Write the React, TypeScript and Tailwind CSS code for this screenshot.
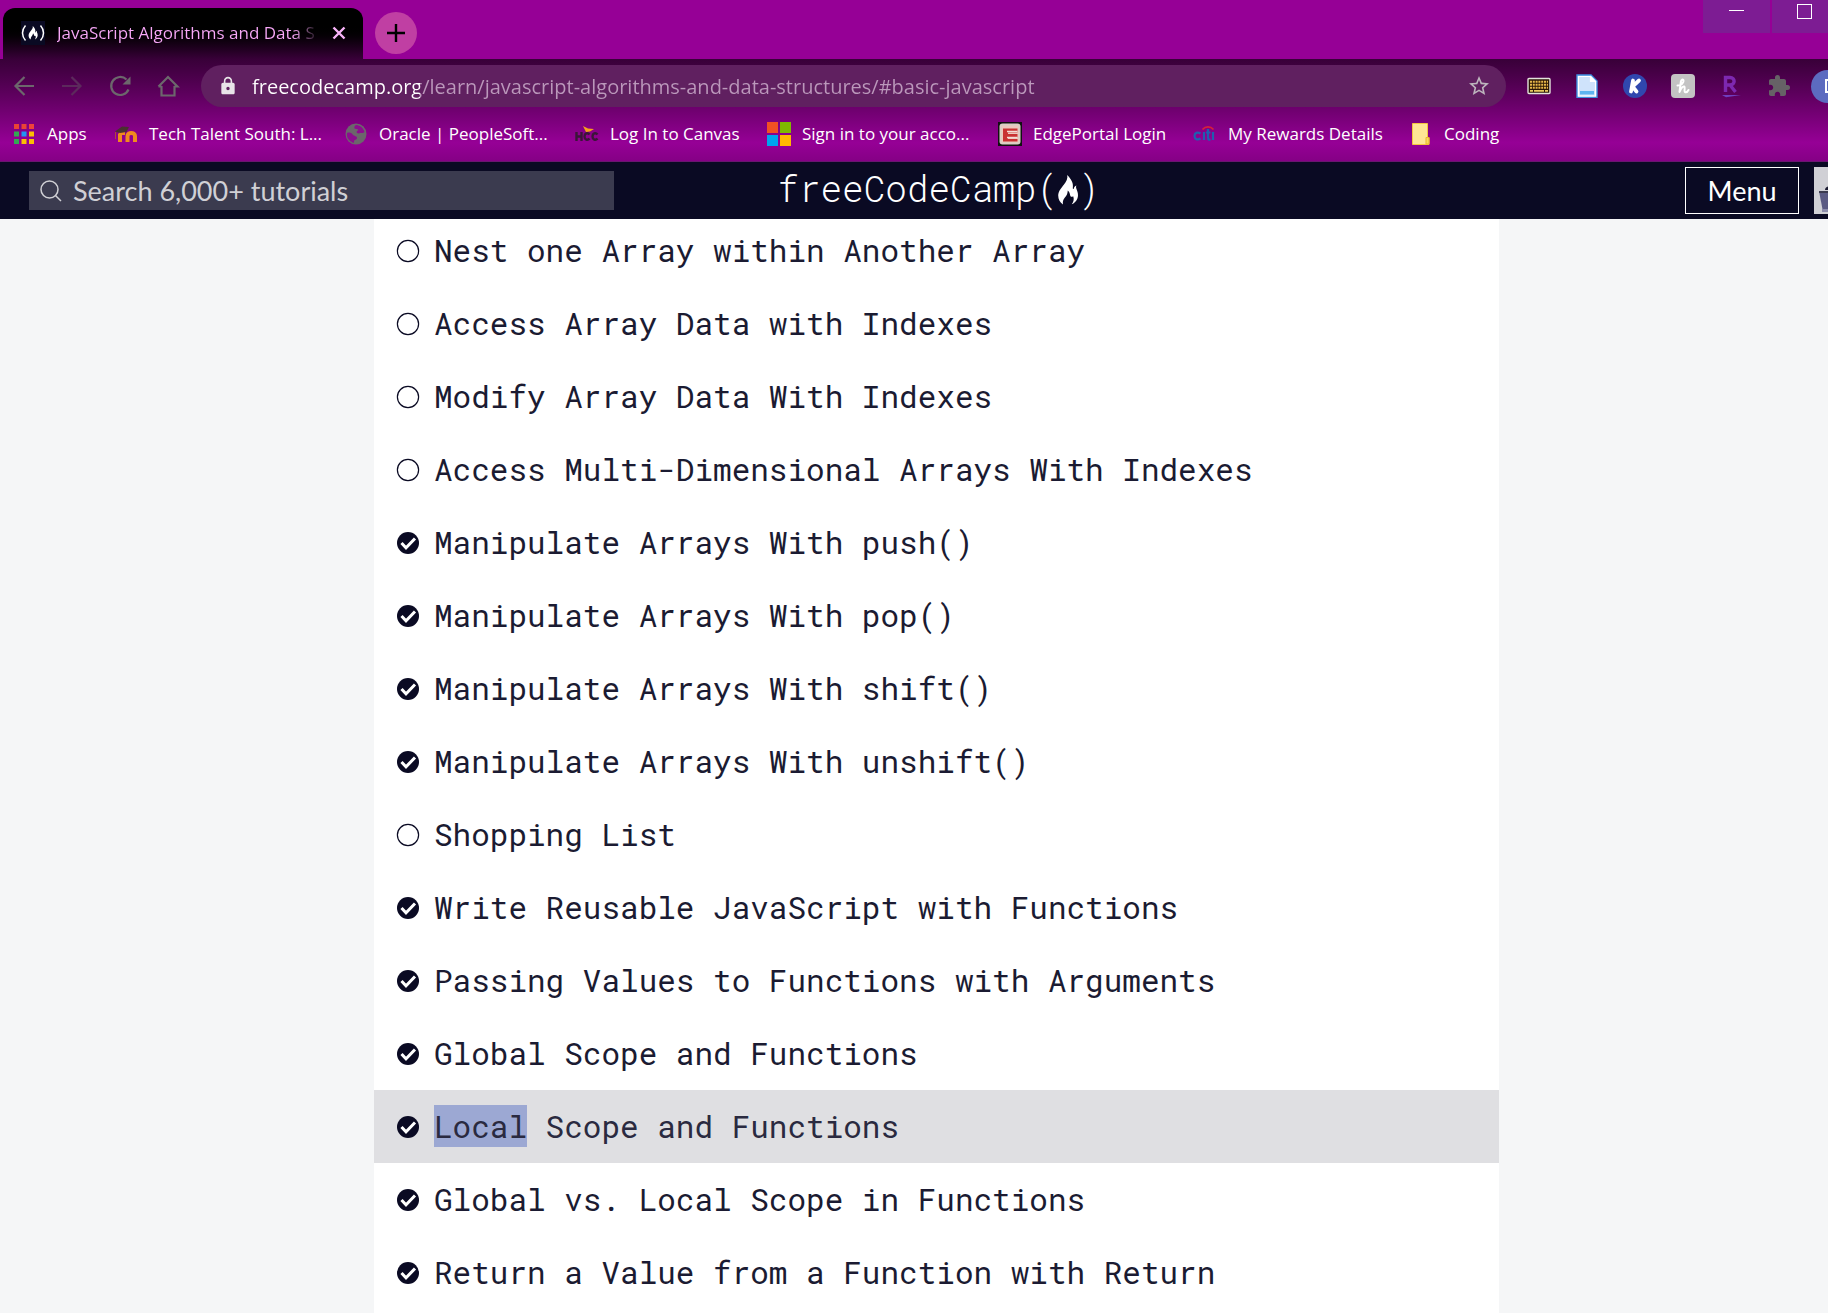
import React from "react";
import { MdExtension, MdLock, MdStarBorder } from "react-icons/md";

function Flame({ className }: { className: string }) {
  return (
    <svg viewBox="0 0 20 30" className={className} fill="currentColor" aria-hidden="true">
      <path d="M9.200 0C10 3.500 8.300 6.500 6 9.500 3.200 13.200.3 16 .2 20.500c0 4 1.800 7 4.800 9C4.500 27 5 25 6.500 23c1.500-2 2.600-3 3-5.500l.3-2c1.400 1.200 2 2.600 2.300 4.600.2 1.600 1 2 2.200 1.600l.9-.4c1 2.700.6 5.200-1.400 7.900 3.700-1.400 6.100-4.900 6.200-9 0-2.800-.9-4.700-1.600-6.500-.5-1.300-.4-2 0-3.200-1.600.7-2.300 1.600-2.600 2.900-.2.900-1 .7-1-.2.300-2.500.2-4.700-1-7C12.600 4 11.300 1.700 9.200 0z" />
    </svg>
  );
}

function FccFavicon() {
  return (
    <svg viewBox="0 0 24 24" className="size-6 shrink-0" aria-hidden="true">
      <rect width="24" height="24" fill="#0a0a23" />
      <path d="M4.500 4.500C.5 9 .5 15 4.500 19.500M19.500 4.500c4 4.500 4 10.500 0 15" fill="none" stroke="#fff" strokeWidth="1.500" />
      <path
        transform="translate(7.500 5) scale(.46)"
        d="M9.200 0C10 3.500 8.300 6.500 6 9.500 3.200 13.200.3 16 .2 20.500c0 4 1.800 7 4.800 9C4.500 27 5 25 6.500 23c1.500-2 2.600-3 3-5.500l.3-2c1.400 1.200 2 2.600 2.300 4.600.2 1.600 1 2 2.200 1.600l.9-.4c1 2.700.6 5.200-1.400 7.900 3.700-1.400 6.100-4.900 6.200-9 0-2.800-.9-4.700-1.600-6.500-.5-1.300-.4-2 0-3.200-1.600.7-2.300 1.600-2.600 2.900-.2.900-1 .7-1-.2.300-2.500.2-4.700-1-7C12.600 4 11.300 1.700 9.200 0z"
        fill="#fff"
      />
    </svg>
  );
}

function AppsIcon() {
  const colors = ["#ea4335", "#ea4335", "#f0443a", "#34a853", "#2196f3", "#fbbc04", "#34a853", "#fbbc04", "#fbbc04"];
  return (
    <svg viewBox="0 0 24 24" className="size-6" aria-hidden="true">
      {colors.map((c, i) => (
        <rect key={i} x={2 + (i % 3) * 7.5} y={2 + Math.floor(i / 3) * 7.5} width="5" height="5" fill={c} />
      ))}
    </svg>
  );
}

function MoodleIcon() {
  return (
    <svg viewBox="0 0 24 24" className="size-6" aria-hidden="true">
      <path d="M6 20v-8.500M13.500 20v-6c0-4 7.500-4 7.500 0v6" fill="none" stroke="#f08a1e" strokeWidth="4" />
      <path d="M5 11.500h6" stroke="#f08a1e" strokeWidth="3" />
      <path d="M1 9.500L8 4.500l7 .5-2.500 5-6.500 1z" fill="#4a3030" />
      <path d="M1.500 10v7" stroke="#b0483a" strokeWidth="1" />
    </svg>
  );
}

function GlobeIcon() {
  return (
    <svg viewBox="0 0 24 24" className="size-6" aria-hidden="true">
      <circle cx="12" cy="12" r="10.500" fill="#6b666b" />
      <path d="M3 11c3-1 5 0 6 2 1 1 4 1 4 3s-3 1.500-3 3.500-1 1.500-2 .5C5 18.500 2.300 16 3 11zM12.500 3c3.500.3 7 3 8 7-2 2-4 0-5.500 1.500-2 0-3-1-2-2.500 2-1 1-2-1-2-2.500 0-2-3.500.5-4z" fill="#8d0d8f" />
    </svg>
  );
}

function HccIcon() {
  return (
    <svg viewBox="0 0 24 24" className="size-6" aria-hidden="true">
      <path d="M1.500 10v9M6.500 10v9M1.500 14.500h5M14.500 12.500c-2-2.500-5-1-5 2s3 4.500 5 2M22.500 12.500c-2-2.500-5-1-5 2s3 4.500 5 2" fill="none" stroke="#3a1638" strokeWidth="2.400" />
      <path d="M8 4l5 2.500 6 .5-4 2.500-4 .500z" fill="#f5a21b" />
    </svg>
  );
}

function MicrosoftIcon() {
  return (
    <svg viewBox="0 0 24 24" className="size-6" aria-hidden="true">
      <path d="M0 0h11v11H0z" fill="#f25022" />
      <path d="M13 0h11v11H13z" fill="#7fba00" />
      <path d="M0 13h11v11H0z" fill="#00a4ef" />
      <path d="M13 13h11v11H13z" fill="#ffb900" />
    </svg>
  );
}

function EdgePortalIcon() {
  return (
    <svg viewBox="0 0 24 24" className="size-6" aria-hidden="true">
      <rect width="24" height="24" fill="#111" />
      <rect x="1.500" y="1.500" width="21" height="21" rx="3" fill="#d9cfc4" />
      <rect x="3.500" y="3.500" width="17" height="17" fill="#ecc8bd" />
      <path d="M5 6.500h14.500v4H10v1.500h9.500v3.500H10V17h9.500v2.500H5z" fill="#c93232" />
      <path d="M9 9.500h10.500M9 15.500h10.500" stroke="#f3dcd4" strokeWidth="1.400" />
    </svg>
  );
}

function CitiIcon() {
  return (
    <svg viewBox="0 0 24 24" className="size-6" aria-hidden="true">
      <path d="M7.500 11.500c-3-2-6-.5-6 2.500s3 4.500 6 2.500M11 10v8M15 7v9c0 1.500 1 1.800 2.500 1.500M13 10.500h4.500M20 10v8" fill="none" stroke="#1f5fb0" strokeWidth="2.200" />
      <path d="M9.500 7.500c3-3.500 8-3.500 11 0" fill="none" stroke="#d6203a" strokeWidth="1.800" />
    </svg>
  );
}

function FolderIcon() {
  return (
    <svg viewBox="0 0 24 24" className="size-6" aria-hidden="true">
      <path d="M3.500 1.500h15v14h1.500v7H3.500z" fill="#ffe694" stroke="#f3c63f" />
      <path d="M17 22v-6.500h3V22z" fill="#f8d860" stroke="#e9b92b" />
    </svg>
  );
}

const bookmarks = [
  { label: "Apps", icon: <AppsIcon />, width: "w-[102px]" },
  { label: "Tech Talent South: L...", icon: <MoodleIcon />, width: "w-[230px]" },
  { label: "Oracle | PeopleSoft...", icon: <GlobeIcon />, width: "w-[231px]" },
  { label: "Log In to Canvas", icon: <HccIcon />, width: "w-[192px]" },
  { label: "Sign in to your acco...", icon: <MicrosoftIcon />, width: "w-[231px]" },
  { label: "EdgePortal Login", icon: <EdgePortalIcon />, width: "w-[195px]" },
  { label: "My Rewards Details", icon: <CitiIcon />, width: "w-[216px]" },
  { label: "Coding", icon: <FolderIcon />, width: "w-[110px]" },
];

const extensions = [
  {
    name: "Keyboard",
    icon: (
      <svg viewBox="0 0 24 24" className="size-6" aria-hidden="true">
        <rect x="1" y="4.500" width="22" height="15" rx="1" fill="#2b1606" stroke="#e3e3dc" strokeWidth="1.400" />
        <path d="M3 7.800h18M3 10.800h18M3 13.800h18" stroke="#e8b84a" strokeWidth="2" strokeDasharray="2 .8" />
        <path d="M3 16.800h18" stroke="#e8c860" strokeWidth="1.800" strokeDasharray="3 1 10 1" />
      </svg>
    ),
  },
  {
    name: "Document",
    icon: (
      <svg viewBox="0 0 24 24" className="size-6" aria-hidden="true">
        <path d="M2 1h14l6 6v16.500H2z" fill="#cfe3fb" stroke="#3f8fe0" strokeWidth="1.400" />
        <path d="M3.500 2.500h12v5h5v14.500h-17z" fill="none" stroke="#fff" strokeWidth="1.200" />
        <path d="M15.500 1.500v6h6z" fill="#fff" />
        <path d="M5 17h14v3.500H5z" fill="#5db4f0" />
      </svg>
    ),
  },
  {
    name: "Keeper",
    icon: (
      <svg viewBox="0 0 24 24" className="size-6" aria-hidden="true">
        <circle cx="12" cy="12" r="12" fill="#3047ae" />
        <path d="M10 6.500L8 17.500M16 6.500l-6.500 6 4 5" fill="none" stroke="#fff" strokeWidth="3.800" strokeLinecap="round" strokeLinejoin="round" />
      </svg>
    ),
  },
  {
    name: "Honey",
    icon: (
      <svg viewBox="0 0 24 24" className="size-6" aria-hidden="true">
        <rect width="24" height="24" rx="4" fill="#c3c3c3" />
        <path d="M6.500 11.500c4 0 6.500-3 6-5.200-.5-1.500-2.200-.8-2.600 1.200L8.500 18c1.500-4 3.500-6 4.800-5.500s-.8 5 .9 5.700c1.300.5 2.500-.7 3.300-2.200" fill="none" stroke="#fff" strokeWidth="2" strokeLinecap="round" strokeLinejoin="round" />
      </svg>
    ),
  },
  {
    name: "Rakuten",
    icon: (
      <svg viewBox="0 0 24 24" className="size-6" aria-hidden="true">
        <path d="M6.500 18V3.500h4.500c5.500 0 5.500 7.500 0 7.500H7M11 11l5.500 7" fill="none" stroke="#7d28b0" strokeWidth="3.400" />
        <path d="M3 21h19l-15 2.200z" fill="#6f3fc0" />
      </svg>
    ),
  },
];

const challenges = [
  { title: "Nest one Array within Another Array", done: false },
  { title: "Access Array Data with Indexes", done: false },
  { title: "Modify Array Data With Indexes", done: false },
  { title: "Access Multi-Dimensional Arrays With Indexes", done: false },
  { title: "Manipulate Arrays With push()", done: true },
  { title: "Manipulate Arrays With pop()", done: true },
  { title: "Manipulate Arrays With shift()", done: true },
  { title: "Manipulate Arrays With unshift()", done: true },
  { title: "Shopping List", done: false },
  { title: "Write Reusable JavaScript with Functions", done: true },
  { title: "Passing Values to Functions with Arguments", done: true },
  { title: "Global Scope and Functions", done: true },
  { title: "Local Scope and Functions", done: true, active: true, marked: "Local" },
  { title: "Global vs. Local Scope in Functions", done: true },
  { title: "Return a Value from a Function with Return", done: true },
];

function StatusIcon({ done }: { done: boolean }) {
  return (
    <svg viewBox="0 0 24 24" className="size-6 shrink-0" role="img" aria-label={done ? "Passed" : "Not passed"}>
      {done ? (
        <>
          <circle cx="12" cy="12" r="11" fill="#0a0a23" />
          <path d="M5.500 12l4.500 4.800L19 7.500" fill="none" stroke="#fff" strokeWidth="3" />
        </>
      ) : (
        <circle cx="12" cy="12" r="10.600" fill="none" stroke="#0a0a23" strokeWidth="1.200" />
      )}
    </svg>
  );
}

function TabStrip() {
  return (
    <div className="flex h-[59px] items-start bg-[#960096] pl-[3px]">
      <div className="mt-2 flex h-[51px] w-[360px] shrink-0 items-center rounded-t-xl bg-linear-to-b from-black from-30% to-[#380038] pb-px pl-[18px]">
        <FccFavicon />
        <span className="ml-3 w-[262px] overflow-hidden bg-linear-to-r from-[#f9a8f9] from-90% to-transparent bg-clip-text text-[17px] whitespace-nowrap text-transparent">
          JavaScript Algorithms and Data S
        </span>
        <button type="button" aria-label="Close tab" className="ml-[10px] flex size-5 items-center justify-center text-[#f9b4f9]">
          <svg viewBox="0 0 14 14" className="size-[14px]" fill="none" stroke="currentColor" strokeWidth="2.400" aria-hidden="true">
            <path d="M1.500 1.500l11 11M12.500 1.500l-11 11" />
          </svg>
        </button>
      </div>
      <button type="button" aria-label="New tab" className="mt-3 ml-3 flex size-[42px] shrink-0 items-center justify-center rounded-full bg-[#c03fa3]">
        <svg viewBox="0 0 18 18" className="size-[18px]" fill="none" stroke="#000" strokeWidth="2.400" aria-hidden="true">
          <path d="M9 0v18M0 9h18" />
        </svg>
      </button>
      <div className="ml-auto flex gap-[2px]">
        <button type="button" aria-label="Minimize" className="flex h-[33px] w-[67px] justify-center bg-[#7d1c93] pt-[10px]">
          <span className="h-px w-[15px] bg-white" />
        </button>
        <button type="button" aria-label="Maximize" className="flex h-[33px] w-14 bg-[#7d1c93] pt-1 pl-[25px]">
          <span className="size-[15px] border border-white" />
        </button>
      </div>
    </div>
  );
}

function Toolbar() {
  return (
    <div className="flex h-[54px] items-center text-[#6c676c]">
      <nav className="flex w-[201px] shrink-0 gap-6 pl-3">
        <button type="button" aria-label="Back" className="size-6">
          <svg viewBox="0 0 24 24" className="size-6" fill="none" stroke="currentColor" strokeWidth="2.200" aria-hidden="true">
            <path d="M22 12H4M12.500 3L3.500 12l9 9" />
          </svg>
        </button>
        <button type="button" aria-label="Forward" className="size-6 text-[#5c2a5c]">
          <svg viewBox="0 0 24 24" className="size-6" fill="none" stroke="currentColor" strokeWidth="2.200" aria-hidden="true">
            <path d="M2 12h18M11.500 3l9 9-9 9" />
          </svg>
        </button>
        <button type="button" aria-label="Reload" className="size-6">
          <svg viewBox="0 0 24 24" className="size-6" fill="none" stroke="currentColor" strokeWidth="2.200" aria-hidden="true">
            <path d="M20.500 15.500A9 9 0 1 1 18.500 5.500" />
            <path d="M22.500 2.500v8h-8z" fill="currentColor" stroke="none" />
          </svg>
        </button>
        <button type="button" aria-label="Home" className="size-6">
          <svg viewBox="0 0 24 24" className="size-6" fill="none" stroke="currentColor" strokeWidth="2.200" aria-hidden="true">
            <path d="M5.500 12v9.500h13V12M2.500 12.500L12 3l9.500 9.500h-3M2.500 12.500h3" />
          </svg>
        </button>
      </nav>
      <form className="flex h-[42px] min-w-0 flex-1 items-center rounded-full bg-[#602060] pr-[15px] pl-[17px]">
        <MdLock className="size-5 shrink-0 text-[#e8e4e8]" aria-hidden="true" />
        <input
          type="text"
          aria-label="Address"
          readOnly
          value="freecodecamp.org/learn/javascript-algorithms-and-data-structures/#basic-javascript"
          className="ml-[14px] min-w-0 flex-1 bg-linear-to-r from-white from-[168px] to-[#bb98bb] to-[168px] bg-clip-text pt-[2px] text-[20px] text-transparent outline-none"
        />
        <button type="button" aria-label="Bookmark this page" className="size-6 text-[#bdb5bd]">
          <MdStarBorder className="size-6" />
        </button>
      </form>
      <div className="flex w-[322px] shrink-0 items-center gap-6 overflow-hidden pl-[21px]">
        {extensions.map((ext) => (
          <button type="button" key={ext.name} aria-label={ext.name} className="size-6 shrink-0">
            {ext.icon}
          </button>
        ))}
        <button type="button" aria-label="Extensions" className="size-6 shrink-0 text-[#666266]">
          <MdExtension className="size-6" />
        </button>
        <button type="button" aria-label="Profile" className="-ml-1 flex size-[33px] shrink-0 items-center rounded-full bg-[#5c6bc0] pl-[14px]">
          <span className="h-[14px] w-[10px] rounded-r-full border-2 border-white" />
        </button>
      </div>
    </div>
  );
}

function BookmarksBar() {
  return (
    <nav className="flex h-12 items-center pb-[6px] pl-3 text-[17px] text-white">
      {bookmarks.map((b) => (
        <a key={b.label} href="#bookmark" className={`flex shrink-0 items-center gap-[11px] whitespace-nowrap ${b.width}`}>
          {b.icon}
          {b.label}
        </a>
      ))}
    </nav>
  );
}

function SiteHeader() {
  return (
    <header className="grid h-[57px] grid-cols-[1fr_auto_1fr] items-center bg-[#0a0a23] font-[Lato,sans-serif] text-white">
      <form className="ml-[29px] flex h-[39px] w-[585px] items-center gap-[11px] bg-[#3b3b4f] pl-[11px]">
        <svg viewBox="0 0 22 22" className="size-[22px] shrink-0" fill="none" stroke="#d0d0d5" strokeWidth="1.500" aria-hidden="true">
          <circle cx="9.500" cy="9.500" r="8.500" />
          <path d="M15.500 15.500l5.500 5.500" />
        </svg>
        <input
          type="search"
          aria-label="Search tutorials"
          placeholder="Search 6,000+ tutorials"
          className="min-w-0 flex-1 pt-[2px] text-[27px] outline-none placeholder:text-[#d0d0d5]"
        />
      </form>
      <a href="#home" className="flex items-center pb-[5px] pl-1 font-['Roboto_Mono','Liberation_Mono',monospace] text-[36px] leading-none font-light">
        freeCodeCamp(
        <Flame className="mt-1 h-[30px] w-5" />)
      </a>
      <div className="flex items-center justify-end gap-[15px]">
        <button type="button" className="h-[47px] w-[114px] border border-white pt-[2px] text-[27px]">
          Menu
        </button>
        <a href="#profile" aria-label="Profile" className="block h-[47px] w-[59px] bg-[#d0d0d5]">
          <svg viewBox="0 0 59 47" className="h-[47px] w-[59px]" aria-hidden="true">
            <path d="M5 24h40l-4 21H9z" fill="#5b5b83" />
            <path d="M5 24h40v2H5z" fill="#3b3b4f" />
            <path d="M8 42h34v3H8z" fill="#8d8dac" />
            <path d="M11 23c0-3 3-4 6-4v4z" fill="#1b1b32" />
          </svg>
        </a>
      </div>
    </header>
  );
}

export default function App() {
  return (
    <div className="flex h-screen flex-col overflow-hidden bg-[#f5f6f7]">
      <div className="shrink-0 font-['Segoe_UI','Open_Sans','Noto_Sans',sans-serif]">
        <TabStrip />
        <div className="border-b border-[#6a1670] bg-linear-to-b from-[#380038] via-[#960096] via-82% to-[#850085]">
          <Toolbar />
          <BookmarksBar />
        </div>
      </div>
      <div className="flex min-h-0 w-[calc(100%+45px)] flex-1 flex-col">
        <SiteHeader />
        <main className="min-h-0 flex-1 overflow-hidden">
          <ul className="mx-auto -mt-[5px] min-h-full w-full max-w-[1125px] bg-white pb-2 font-['Roboto_Mono','DejaVu_Sans_Mono',monospace] text-[31px] text-[#1b1b32]">
            {challenges.map((c) => (
              <li key={c.title}>
                <a
                  href="#challenge"
                  className={
                    c.active
                      ? "flex h-[73px] items-center gap-[14px] bg-[#dfdfe2] pl-[22px] text-[#2a2a40]"
                      : "flex h-[73px] items-center gap-[14px] pl-[22px]"
                  }
                >
                  <StatusIcon done={c.done} />
                  <span className="whitespace-nowrap">
                    {c.marked ? <mark className="bg-[#9ca8d3] py-px text-inherit">{c.marked}</mark> : null}
                    {c.marked ? c.title.slice(c.marked.length) : c.title}
                  </span>
                </a>
              </li>
            ))}
          </ul>
        </main>
      </div>
    </div>
  );
}
